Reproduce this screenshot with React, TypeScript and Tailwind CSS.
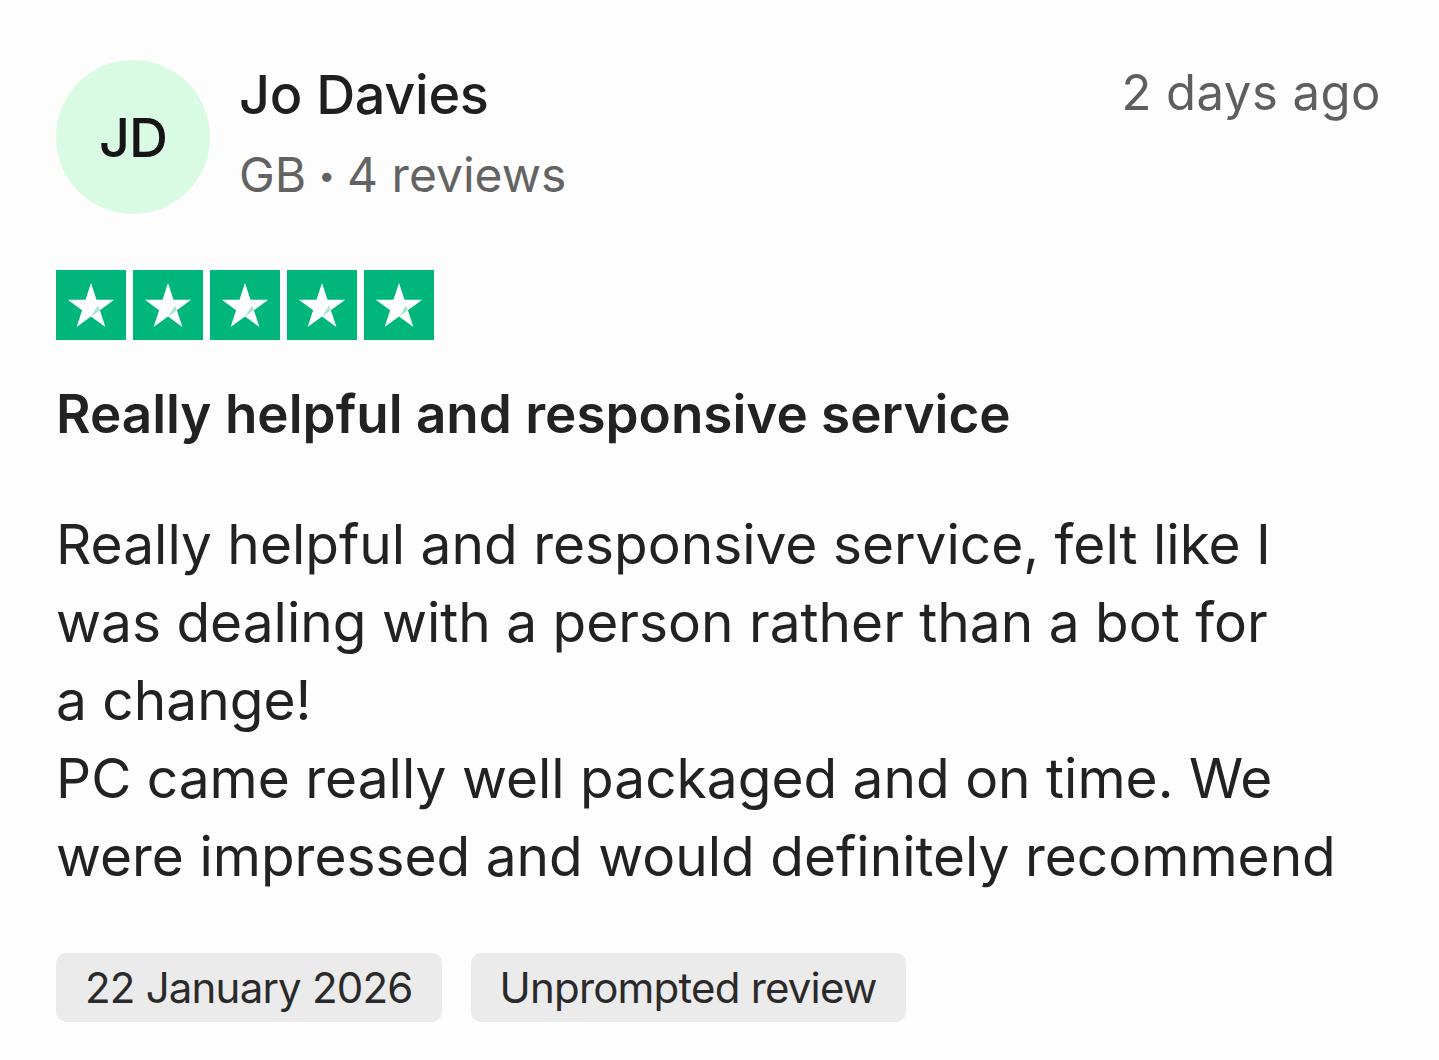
const lines = [
  'Really helpful and responsive service, felt like I',
  'was dealing with a person rather than a bot for',
  'a change!',
  'PC came really well packaged and on time. We',
  'were impressed and would definitely recommend',
]

function StarBox() {
  return (
    <div className="w-[70px] h-[70px] bg-[#00b67a] flex items-center justify-center">
      <svg width="48" height="46" viewBox="0 0 24 23">
        <path d="M12 0.5 L14.75 8.9 L23.6 8.9 L16.45 14.1 L19.2 22.5 L12 17.3 L4.8 22.5 L7.55 14.1 L0.4 8.9 L9.25 8.9 Z" fill="#fff" />
        <path d="M12 17.3 L16.45 14.1 L15.5 11.8 Z" fill="#00b67a" opacity="0.35" />
      </svg>
    </div>
  )
}

export default function App() {
  return (
    <div className="min-h-[1060px] w-full bg-[#fdfdfd] px-[56px] pt-[60px] font-['Inter',sans-serif] text-[#1f1f1f]">
      {/* Header */}
      <div className="flex items-start">
        <div className="w-[154px] h-[154px] rounded-full bg-[#dafbe3] flex items-center justify-center shrink-0">
          <span className="text-[54px] font-medium text-[#151515] tracking-[-1px]">JD</span>
        </div>
        <div className="ml-[29px] flex-1">
          <div className="text-[54px] leading-none font-medium pt-[8px] tracking-[-0.3px]">Jo Davies</div>
          <div className="text-[48px] leading-none text-[#636363] mt-[29px] flex items-center">
            <span>GB</span>
            <span className="text-[30px] mx-[12px]">•</span>
            <span>4 reviews</span>
          </div>
        </div>
        <div className="text-[49px] leading-none text-[#5e5e5e] pt-[8px] pr-[2px] tracking-[0.5px]">2 days ago</div>
      </div>

      {/* Rating */}
      <div className="flex gap-[7px] mt-[56px]">
        {[0, 1, 2, 3, 4].map(i => <StarBox key={i} />)}
      </div>

      <h2 className="mt-[48px] text-[53px] leading-none font-semibold text-[#222]">
        Really helpful and responsive service
      </h2>

      <div className="mt-[64px] text-[55px] leading-[78px] text-[#222]">
        {lines.map(l => (
          <div key={l} className="whitespace-nowrap">{l}</div>
        ))}
      </div>

      <div className="flex gap-[29px] mt-[58px]">
        <span className="h-[69px] px-[29px] rounded-[10px] bg-[#ebebeb] flex items-center text-[42px] text-[#2a2a2a] tracking-[-0.8px]">22 January 2026</span>
        <span className="h-[69px] px-[29px] rounded-[10px] bg-[#ebebeb] flex items-center text-[42px] text-[#2a2a2a] tracking-[-0.8px]">Unprompted review</span>
      </div>
    </div>
  )
}
